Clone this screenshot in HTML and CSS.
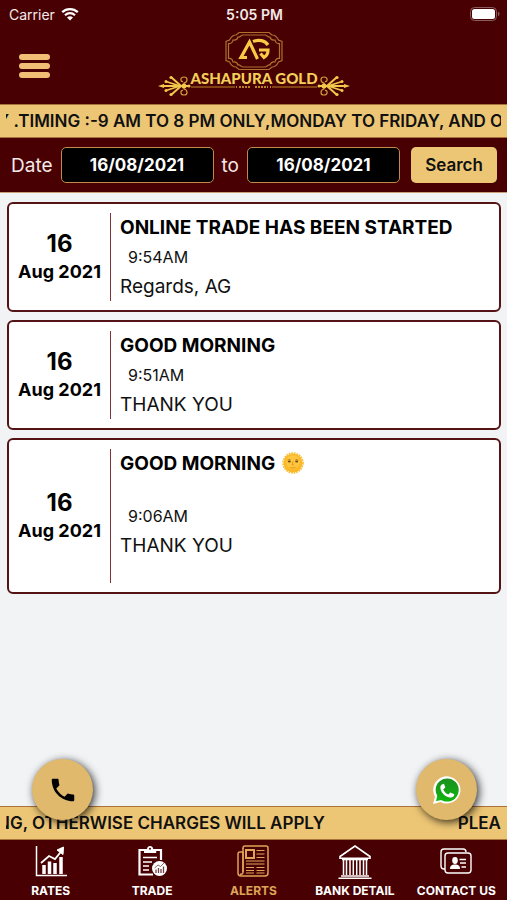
FILE: index.html
```html
<!DOCTYPE html>
<html lang="en">
<head>
    <meta charset="utf-8">
    <meta name="viewport" content="width=device-width, initial-scale=1">
    <title>Ashapura Gold</title>
    <link rel="stylesheet" href="styles.css">
</head>
<body>
    <div class="status">
        <div class="carrier">
            <span>Carrier</span>
            <svg width="18" height="14" viewBox="0 0 18 14">
                <path d="M1.200 5.200a11.200 11.200 0 0 1 15.600 0" fill="none" stroke="#fff" stroke-width="2.300"/>
                <path d="M4 8.200a7.200 7.200 0 0 1 10 0" fill="none" stroke="#fff" stroke-width="2.200"/>
                <path d="M9 13.600 6 10.600a4.300 4.300 0 0 1 6 0z" fill="#fff"/>
            </svg>
        </div>
        <div class="time">5:05 PM</div>
        <svg class="battery" width="30" height="14" viewBox="0 0 30 14">
            <rect x="0.500" y="0.500" width="26" height="13" rx="4" fill="none" stroke="#8d5c60"/>
            <rect x="2" y="2" width="23" height="10" rx="2.500" fill="#fff"/>
            <path d="M28 4.800c2 .6 2 3.800 0 4.400z" fill="#8d5c60"/>
        </svg>
    </div>

    <header class="header">
        <button class="menu" aria-label="Menu">
            <span class="bar"></span>
            <span class="bar"></span>
            <span class="bar"></span>
        </button>
        <svg class="logo" width="194" height="70" viewBox="0 0 194 70">
            <defs>
                <g id="corner">
                    <path d="M69 20v-9.500l3.500-1.500c1.500-3 3.500-5 6.500-5l3-2.500h15"/>
                    <path d="M71.500 20v-7.500c3 .5 4-1 4.500-3.500 3 .5 4.500-1 5-3 2.500.5 3-2 5-2h11"/>
                </g>
                <g id="ornament">
                    <path d="M33 55H6" stroke-width="2"/>
                    <path d="M24 55 14 46M24 55 14 64" stroke-width="2"/>
                    <path d="M23 55 9 50.500M23 55 9 59.500" stroke-width="1.800"/>
                    <path d="M1 55l6-2v4z" fill="#f1c84b" stroke="none"/>
                    <circle cx="14" cy="46.500" r="1.600" fill="#f1c84b" stroke="none"/>
                    <circle cx="14" cy="63.500" r="1.600" fill="#f1c84b" stroke="none"/>
                    <circle cx="9" cy="50.500" r="1.500" fill="#f1c84b" stroke="none"/>
                    <circle cx="9" cy="59.500" r="1.500" fill="#f1c84b" stroke="none"/>
                    <path d="M27 55v-3c4-1 4-6 0-6s-4 5-1 4.500M27 55v3c4 1 4 6 0 6s-4-5-1-4.500" stroke="#cf9c3a" stroke-width="1.200"/>
                    <circle cx="27" cy="55" r="2.500" fill="#f1c84b" stroke="none"/>
                    <circle cx="32" cy="55" r="1.500" fill="#f1c84b" stroke="none"/>
                </g>
            </defs>
            <g fill="none" stroke="#b06f2e" stroke-width="1.200">
                <use href="#corner"/>
                <use href="#corner" transform="matrix(-1 0 0 1 194 0)"/>
                <use href="#corner" transform="matrix(1 0 0 -1 0 40)"/>
                <use href="#corner" transform="matrix(-1 0 0 -1 194 40)"/>
            </g>
            <g fill="none" stroke="#f8ca45" stroke-width="3.200">
                <path d="M90 26.500H84L92.500 11l8 17"/>
                <path d="M96 10.500c6-2.500 12-1 15 3.500"/>
                <path d="M102 19h9c0 3-1.500 6-4 7.500l-3.500-4"/>
            </g>
            <g fill="none" stroke="#f1c84b">
                <use href="#ornament"/>
                <use href="#ornament" transform="matrix(-1 0 0 1 194 0)"/>
            </g>
            <path d="M34 56h44M115 56h45" stroke="#b98527"/>
            <path d="M79 56h1M82 56h12M98 56h13M113 56h1" stroke="#b98527" stroke-width="2" stroke-dasharray="2 1"/>
            <text class="logo-name" x="97" y="53" text-anchor="middle">ASHAPURA GOLD</text>
        </svg>
    </header>

    <div class="ticker">
        <div class="ticker-text ticker-top">Y .TIMING :-9 AM TO 8 PM ONLY,MONDAY TO FRIDAY, AND O</div>
    </div>

    <form class="search">
        <label for="from">Date</label>
        <input class="date" id="from" type="text" value="16/08/2021">
        <label for="to">to</label>
        <input class="date" id="to" type="text" value="16/08/2021">
        <button class="search-button" type="button">Search</button>
    </form>

    <main class="alerts">
        <article class="card">
            <div class="day"><span class="day-number">16</span><span>Aug 2021</span></div>
            <div class="message">
                <h2>ONLINE TRADE HAS BEEN STARTED</h2>
                <p class="posted">9:54AM</p>
                <p>Regards, AG</p>
            </div>
        </article>
        <article class="card">
            <div class="day"><span class="day-number">16</span><span>Aug 2021</span></div>
            <div class="message">
                <h2>GOOD MORNING</h2>
                <p class="posted">9:51AM</p>
                <p>THANK YOU</p>
            </div>
        </article>
        <article class="card">
            <div class="day"><span class="day-number">16</span><span>Aug 2021</span></div>
            <div class="message spaced">
                <h2>GOOD MORNING
                    <svg class="sun" width="22" height="22" viewBox="0 0 22 22">
                        <circle cx="11" cy="11" r="9.800" fill="none" stroke="#f7bf3b" stroke-width="2" stroke-dasharray="1.600 1"/>
                        <circle cx="11" cy="11" r="9.400" fill="#fbb829"/>
                        <circle cx="11" cy="10" r="7" fill="#fdc63e"/>
                        <path d="M5.500 8.200q1.600-1.400 3.200-.4M13.300 7.800q1.600-1 3.200.4" fill="none" stroke="#b97712" stroke-width=".8"/>
                        <ellipse cx="7.300" cy="9.600" rx="1.500" ry="1" fill="#6b4a1c"/>
                        <ellipse cx="14.700" cy="9.600" rx="1.500" ry="1" fill="#6b4a1c"/>
                        <path d="M11 9.500l-.8 3.300h1.600M8.500 15.300q2.500 1.400 5 0" fill="none" stroke="#e3931c" stroke-width=".9"/>
                    </svg>
                </h2>
                <p class="posted">9:06AM</p>
                <p>THANK YOU</p>
            </div>
        </article>
    </main>

    <footer class="footer">
        <a class="round call" href="#" aria-label="Call">
            <svg width="30" height="30" viewBox="0 0 24 24">
                <path fill="#000" d="M6.620 10.790c1.440 2.830 3.760 5.140 6.590 6.590l2.200-2.200c.27-.27.67-.36 1.020-.24 1.120.37 2.330.57 3.570.57.550 0 1 .45 1 1V20c0 .55-.45 1-1 1C10.610 21 3 13.390 3 4c0-.55.45-1 1-1h3.500c.55 0 1 .45 1 1 0 1.250.2 2.450.57 3.570.11.350.03.740-.25 1.020z"/>
            </svg>
        </a>
        <a class="round whatsapp" href="#" aria-label="WhatsApp">
            <svg width="28" height="28" viewBox="0 0 28 28">
                <defs>
                    <linearGradient id="green" x1="0" y1="0" x2="0" y2="1">
                        <stop offset="0" stop-color="#1b8f1f"/>
                        <stop offset="1" stop-color="#0fb510"/>
                    </linearGradient>
                </defs>
                <path d="M0 28l2-7.300A13.600 13.600 0 1 1 7.500 26z" fill="#fff"/>
                <circle cx="14.200" cy="14" r="11.500" fill="url(#green)"/>
                <path d="M3 25l1.500-6 4.500 5z" fill="#0fb510"/>
                <path transform="translate(5 5) scale(.78)" fill="#fff" d="M6.620 10.790c1.440 2.830 3.760 5.140 6.590 6.590l2.200-2.200c.27-.27.67-.36 1.020-.24l3.800 1.700c.5.200.7.500.6 1.100-.4 2.600-2.500 3.800-4.800 3.500C9 20.500 3.500 14.500 3 8.500c-.1-2.500 1.500-4.500 3.500-4.800.8-.1 1.200.1 1.500.8l1.200 3.100c.15.350.03.740-.25 1.020z"/>
            </svg>
        </a>
        <div class="ticker">
            <div class="ticker-text ticker-bottom">
                <span>NG, OTHERWISE CHARGES WILL APPLY</span>
                <span>PLEA</span>
            </div>
        </div>
        <nav class="nav">
            <a href="#">
                <svg width="32" height="32" viewBox="0 0 32 32" fill="none" stroke="#fff">
                    <path d="M1.500 1v29.500H32" stroke-width="1.500"/>
                    <path d="M9 20v9M14.500 16.500V29M20 18v11M26 12v17" stroke-width="3.500"/>
                    <path d="M6 18l8-7 6 3 6.500-8" stroke-width="1.800"/>
                    <path d="M22 5l6.500-3-.5 7.500z" fill="#fff"/>
                </svg>
                <span>RATES</span>
            </a>
            <a href="#">
                <svg width="32" height="32" viewBox="0 0 32 32" fill="none" stroke="#fff">
                    <path d="M8 5H3.500v24.500H17M20 5h5v10" stroke-width="2.200"/>
                    <path d="M8 4h3c.2-4 6-4 6.200 0h3v4H8z" fill="#fff" stroke="none"/>
                    <circle cx="14" cy="3.700" r="1" fill="#480002" stroke="none"/>
                    <path d="M7 12.500h14M7 17h9M7 21h6M7 25h6" stroke-width="1.700"/>
                    <circle cx="23.500" cy="23.500" r="7.500" fill="#fff" stroke="none"/>
                    <path d="M20 24.500v3.500M22.500 23v5M25 24v4M27.500 21.500V28" stroke="#744044" stroke-width="1.300"/>
                    <path d="M18.500 23l3.500-3 2.500 1.500 3.500-3.500" stroke="#744044" stroke-width=".8"/>
                </svg>
                <span>TRADE</span>
            </a>
            <a class="active" href="#">
                <svg width="32" height="32" viewBox="0 0 32 32" fill="none" stroke="#dda557">
                    <path d="M6 4V3a2 2 0 0 1 2-2h21a2 2 0 0 1 2 2v25a3 3 0 0 1-3 3H4a3 3 0 0 1-3-3V9a2 2 0 0 1 2-2h3v20a2 2 0 0 1-3 2" stroke-width="1.500"/>
                    <path d="M6 3v24" stroke-width="1.500"/>
                    <rect x="9" y="5" width="8" height="8" stroke-width="2"/>
                    <path d="M19.500 5.500h8M19.500 9h8M19.500 12.500h8M9 16h18.500M9 19h18.500M9 22.500h8M19.500 22.500h8M9 25.500h8M19.500 25.500h8M9 28h8M19.500 28h8"/>
                </svg>
                <span>ALERTS</span>
            </a>
            <a href="#">
                <svg width="34" height="34" viewBox="0 0 34 34" fill="none" stroke="#fff">
                    <path d="M2 11.500 17 1l15 10.500v1.800H2z" stroke-width="1.600"/>
                    <path d="M4 14.500h26M3 31h28M.5 33.300h33" stroke-width="1.600"/>
                    <path d="M5.500 15v15M8.500 15v15M12 15v15M15.300 15v15M18.700 15v15M22 15v15M25.500 15v15M28.500 15v15" stroke-width="1.500"/>
                </svg>
                <span>BANK DETAIL</span>
            </a>
            <a href="#">
                <svg width="32" height="32" viewBox="0 0 32 32" fill="none" stroke="#fff">
                    <path d="M5 24H4a3 3 0 0 1-3-3V7a3 3 0 0 1 3-3h19a3 3 0 0 1 3 3" stroke-width="1.400"/>
                    <rect x="5" y="8" width="26" height="20" rx="3" stroke-width="1.400"/>
                    <ellipse cx="15" cy="15.500" rx="2.800" ry="3.400" fill="#fff" stroke="none"/>
                    <path d="M10 24c0-3.500 2-4.500 5-4.500s5 1 5 4.500z" fill="#fff" stroke="none"/>
                    <path d="M19.500 14.500H26M20 18h6M21.500 22H26" stroke-width="1.600"/>
                </svg>
                <span>CONTACT US</span>
            </a>
        </nav>
    </footer>
</body>
</html>
```

FILE: styles.css
```css
* {
    box-sizing: border-box;
}

body {
    display: flex;
    flex-direction: column;
    height: 100vh;
    margin: 0;
    background-color: #f2f3f5;
    color: #111;
    font-family: Inter, "Liberation Sans", sans-serif;
    font-size: 19px;
}

.status {
    display: grid;
    grid-template-columns: 1fr auto 1fr;
    align-items: center;
    height: 28px;
    padding: 0 7px 0 9px;
    background-color: #480002;
    color: #f4e9e9;
    font-size: 14px;
}

.carrier {
    display: flex;
    align-items: center;
    gap: 6px;
}

.time {
    font-weight: 600;
}

.battery {
    justify-self: end;
}

.header {
    display: grid;
    grid-template-columns: 1fr auto 1fr;
    height: 76px;
    padding: 0 19px;
    background-color: #480002;
}

.menu {
    display: flex;
    flex-direction: column;
    justify-content: center;
    gap: 3px;
    width: 31px;
    padding: 0;
    border: none;
    background: none;
    cursor: pointer;
}

.bar {
    width: 31px;
    height: 6px;
    border-radius: 3px;
    background-color: #f0bf75;
}

.logo {
    align-self: center;
}

.logo-name {
    fill: #f2cf58;
    font-family: Lato, sans-serif;
    font-size: 15px;
    font-weight: 900;
}

.ticker {
    height: 34px;
    padding: 0 6px;
    border-top: 1px solid #a9723b;
    border-bottom: 1px solid #a9723b;
    background-color: #edc675;
    color: #111;
    font-size: 17px;
    font-weight: 600;
    line-height: 33px;
}

.ticker-text {
    overflow: hidden;
    white-space: nowrap;
}

.ticker-top {
    text-indent: -9px;
}

.ticker-bottom {
    display: flex;
    justify-content: space-between;
    text-indent: -9px;
}

.ticker-bottom span + span {
    text-indent: 0;
}

.search {
    display: flex;
    align-items: center;
    gap: 8px;
    height: 55px;
    padding: 0 10px 0 11px;
    border-bottom: 1px solid #c9a078;
    background-color: #480002;
    color: #f4e9e9;
}

.date {
    flex: 1;
    min-width: 0;
    height: 36px;
    padding: 0;
    border: 1px solid #c08a4a;
    border-radius: 5px;
    background-color: #000;
    color: #fff;
    font-family: inherit;
    font-size: 17px;
    font-weight: 700;
    text-align: center;
}

.search-button {
    width: 86px;
    height: 36px;
    margin-left: 3px;
    padding: 0;
    border: none;
    border-radius: 5px;
    background-color: #edc675;
    color: #111;
    font-family: inherit;
    font-size: 17px;
    font-weight: 600;
    cursor: pointer;
}

.alerts {
    display: flex;
    flex: 1;
    flex-direction: column;
    gap: 8px;
    padding: 9px 6px 9px 7px;
    overflow: auto;
}

.card {
    display: flex;
    flex-shrink: 0;
    padding: 9px 8px;
    border: 2px solid #541315;
    border-radius: 6px;
    background-color: #fff;
}

.day {
    display: flex;
    flex-direction: column;
    justify-content: center;
    align-items: center;
    width: 94px;
    padding-right: 8px;
    border-right: 1px solid #7c3437;
    color: #000;
    font-size: 18px;
    font-weight: 700;
    line-height: 26px;
}

.day-number {
    font-size: 24px;
    line-height: 30px;
}

.message {
    flex: 1;
    padding-left: 9px;
    line-height: 29px;
}

.message h2 {
    margin: 0;
    color: #000;
    font-size: 19px;
    font-weight: 700;
    line-height: 30px;
}

.message p {
    margin: 0;
}

.message .posted {
    padding-left: 8px;
    font-size: 16px;
}

.spaced h2 {
    padding-bottom: 23px;
}

.spaced {
    padding-bottom: 23px;
}

.sun {
    margin-left: 2px;
    vertical-align: -4px;
}

.footer {
    position: relative;
}

.round {
    position: absolute;
    top: -47px;
    display: flex;
    justify-content: center;
    align-items: center;
    width: 61px;
    height: 61px;
    border-radius: 50%;
    background-color: #e0b96c;
    box-shadow: 2px 2px 9px rgba(0, 0, 0, 0.8);
}

.call {
    left: 32px;
}

.whatsapp {
    right: 30px;
}

.nav {
    display: grid;
    grid-template-columns: repeat(5, 1fr);
    height: 60px;
    background-color: #480002;
}

.nav a {
    display: flex;
    flex-direction: column;
    justify-content: space-between;
    align-items: center;
    padding: 5px 0 1px;
    color: #fff;
    font-size: 12px;
    font-weight: 700;
    line-height: 16px;
    text-decoration: none;
    white-space: nowrap;
}

.nav .active {
    color: #dda557;
}
```
